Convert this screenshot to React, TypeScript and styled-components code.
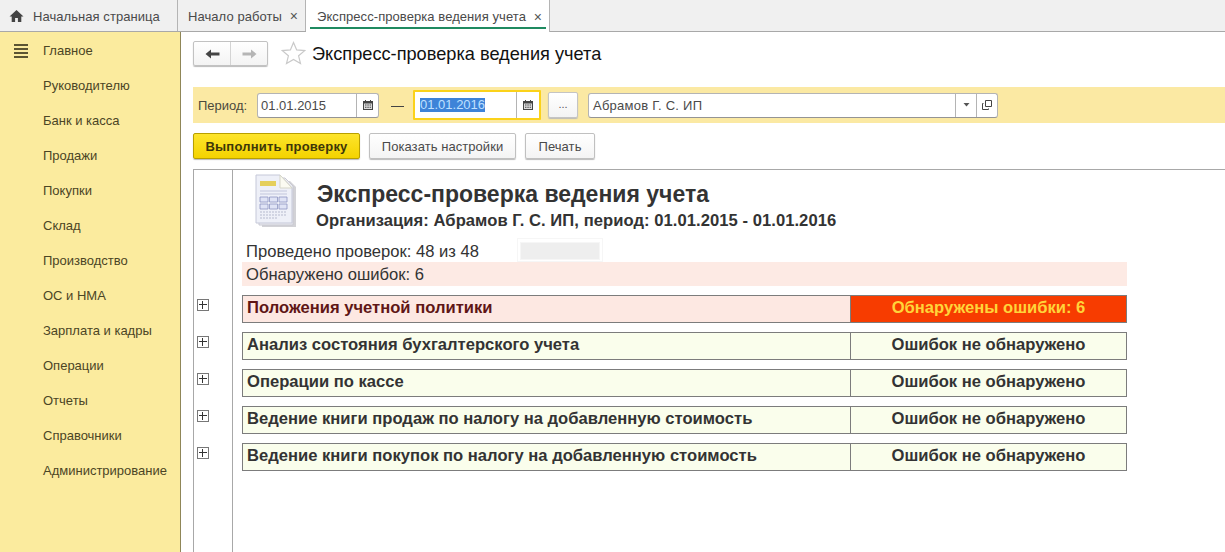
import React from "react";
import styled, { createGlobalStyle } from "styled-components";

const Global = createGlobalStyle`
  html, body { margin: 0; padding: 0; background: #fff; }
  body { font-family: "Liberation Sans", Arial, sans-serif; }
  * { box-sizing: border-box; }
`;

const Page = styled.div`
  width: 1225px; height: 552px; overflow: hidden;
  display: flex; flex-direction: column;
`;
const TabBar = styled.div`
  height: 32px; flex: none; display: flex;
  background: #f0f0f0; border-bottom: 1px solid #a8a8a8;
`;
const HomeTab = styled.div`
  width: 178px; display: flex; align-items: center; padding: 1px 0 0 9px; gap: 9px;
  border-right: 1px solid #b4b4b4; font-size: 13px; color: #4a4a4a; letter-spacing: 0.06px;
`;
const Tab = styled.div<{ $active?: boolean; $w: number }>`
  width: ${p => p.$w}px; position: relative; display: flex; align-items: center;
  justify-content: space-between; padding: 1px 7px 0 ${p => (p.$active ? 11 : 10)}px;
  font-size: 13px; color: #4a4a4a; letter-spacing: 0.07px;
  border-right: 1px solid #b4b4b4;
  background: ${p => (p.$active ? "#fff" : "transparent")};
  height: ${p => (p.$active ? "32px" : "31px")};
  &::after {
    content: ""; display: ${p => (p.$active ? "block" : "none")};
    position: absolute; left: 4px; right: 3px; bottom: 3px; height: 2px; background: #1f8a60;
  }
`;
const Close = styled.span`font-size: 14px; color: #555; line-height: 1;`;
const Body = styled.div`flex: 1; min-height: 0; display: flex;`;
const Side = styled.nav`
  width: 181px; flex: none; background: #fbeb9e; border-right: 1px solid #8f8658;
  padding-top: 1px; position: relative;
`;
const MenuItem = styled.div`
  height: 35px; display: flex; align-items: center; padding-left: 43px;
  font-size: 13px; color: #4b4525;
`;
const Burger = styled.span`
  position: absolute; left: 14px; top: 12px; width: 14px; height: 14px;
  display: flex; flex-direction: column; justify-content: space-between;
  & > i { display: block; height: 2px; background: #5b5432; }
`;
const Main = styled.main`
  flex: 1; min-width: 0; display: flex; flex-direction: column; padding-left: 12px;
`;
const Head = styled.div`
  height: 55px; flex: none; display: flex; align-items: flex-start; padding-top: 9px;
`;
const NavGroup = styled.div`
  width: 75px; height: 25px; display: flex; border: 1px solid #c2c2c2; border-radius: 2px;
  background: linear-gradient(#fff, #f3f3f3); box-shadow: 0 1px 1px #bbb; margin-right: 13px;
`;
const NavBtn = styled.div`
  flex: 1; display: flex; align-items: center; justify-content: center;
  & + & { border-left: 1px solid #d4d4d4; }
`;
const PageTitle = styled.h1`
  margin: 2px 0 0 6px; font-size: 18.2px; line-height: 22px; font-weight: 400; color: #111;
`;
const Filter = styled.div`
  height: 36px; flex: none; background: #fbe9a3; display: flex; align-items: center;
  padding-left: 5px;
`;
const Label = styled.span`font-size: 13px; color: #4b4a3c; width: 59px;`;
const Field = styled.div<{ $w: number; $focus?: boolean }>`
  width: ${p => p.$w}px; height: ${p => (p.$focus ? "30px" : "25px")}; display: flex;
  background: #fff; border-radius: ${p => (p.$focus ? "1px" : "3px")};
  border: ${p => (p.$focus ? "2px solid #fbd21a" : "1px solid #b4b4b4")};
  border-bottom-color: ${p => (p.$focus ? "#fbd21a" : "#949494")};
`;
const FieldText = styled.div<{ $pad?: number; $track?: number }>`
  flex: 1; display: flex; align-items: center; padding-left: ${p => p.$pad ?? 3}px;
  font-size: 13px; color: #4a4a4a; letter-spacing: ${p => p.$track ?? 0}px;
`;
const Selected = styled.span`background: #3e83d8; color: #bfe0ff; line-height: 14px;`;
const FieldBtn = styled.div<{ $w: number }>`
  width: ${p => p.$w}px; flex: none; display: flex; align-items: center; justify-content: center;
  border-left: 1px solid #b4b4b4;
`;
const Dash = styled.span`
  width: 13px; height: 1px; background: #444; margin: 0 9px 0 12px;
  display: block; position: relative; top: 1px;
`;
const Dots = styled.div`
  width: 30px; height: 26px; margin-left: 7px; margin-right: 10px; border: 1px solid #c4c4c4;
  border-radius: 2px; background: linear-gradient(#fff, #f3f3f3); box-shadow: 0 1px 1px #bbb;
  display: flex; align-items: center; justify-content: center; font-size: 11px; color: #555;
  padding-bottom: 2px;
`;
const Actions = styled.div`
  height: 46px; flex: none; display: flex; align-items: center; gap: 9px; padding-top: 0;
`;
const Button = styled.div<{ $primary?: boolean; $w: number }>`
  width: ${p => p.$w}px; height: 26px; display: flex; align-items: center; justify-content: center;
  font-size: 13px; border-radius: 2px;
  letter-spacing: ${p => (p.$primary ? "0.2px" : "0.06px")};
  color: ${p => (p.$primary ? "#3d3608" : "#4a4a4a")};
  font-weight: ${p => (p.$primary ? 700 : 400)};
  border: 1px solid ${p => (p.$primary ? "#b89f00" : "#c0c0c0")};
  background: ${p => (p.$primary ? "linear-gradient(#fde42c, #f4d300)" : "linear-gradient(#fff, #f4f4f4)")};
  box-shadow: 0 1px 1px #bbb;
`;
const Report = styled.section`
  flex: 1; min-height: 0; display: flex; border-top: 1px solid #a8a8a8; border-left: 1px solid #a8a8a8;
`;
const Gutter = styled.div`
  width: 39px; flex: none; border-right: 1px solid #a8a8a8; padding: 129px 0 0 3px;
  display: flex; flex-direction: column; gap: 25px;
`;
const Plus = styled.div`
  width: 12px; height: 12px; border: 1px solid #777; background: #fff; position: relative;
  &::before { content: ""; position: absolute; left: 1px; right: 1px; top: 4px; height: 1px; background: #333; }
  &::after { content: ""; position: absolute; top: 1px; bottom: 1px; left: 4px; width: 1px; background: #333; }
`;
const Sheet = styled.div`flex: 1; min-width: 0; padding-left: 9px; width: 885px;`;
const SheetHead = styled.div`
  height: 68px; display: flex; align-items: flex-start; padding: 4px 0 0 13px;
`;
const Titles = styled.div`margin-left: 20px; padding-top: 7px;`;
const ReportTitle = styled.div`font-size: 23px; font-weight: 700; color: #333; line-height: 26px;`;
const Org = styled.div`
  font-size: 16.6px; font-weight: 700; color: #333; line-height: 18px; margin: 5px 0 0 -1px;
  letter-spacing: 0.05px;
`;
const Stat = styled.div`
  height: 24px; width: 885px; display: flex; align-items: center; padding: 3px 0 0 4px;
  font-size: 16.6px; color: #333; position: relative;
`;
const Progress = styled.div`
  position: absolute; left: 275px; top: 0; width: 86px; height: 24px;
  border: 1px solid #f6f6f6; padding: 3px 2px 1px;
  & > i { display: block; height: 100%; background: #eee; border: 1px solid #f6f6f6; }
`;
const ErrorStrip = styled(Stat)`background: #fdeae4; padding-top: 2px;`;
const Rows = styled.div`
  margin-top: 9px; width: 885px; display: flex; flex-direction: column; gap: 9px;
`;
const Row = styled.div<{ $err?: boolean }>`
  height: 28px; display: flex; border: 1px solid #7c7c7c;
  background: ${p => (p.$err ? "#fde8e2" : "#fafeec")};
  color: ${p => (p.$err ? "#5f1616" : "#333")};
  font-size: 16.6px; font-weight: 700;
`;
const RowName = styled.div`
  width: 608px; flex: none; padding: 2px 0 0 4px; line-height: 20px; border-right: 1px solid #7c7c7c;
`;
const RowState = styled.div<{ $err?: boolean }>`
  flex: 1; text-align: center; padding-top: 2px; line-height: 20px;
  background: ${p => (p.$err ? "#f73c00" : "transparent")};
  color: ${p => (p.$err ? "#ffd43a" : "#333")};
`;

const menu = ["Главное","Руководителю","Банк и касса","Продажи","Покупки","Склад","Производство","ОС и НМА","Зарплата и кадры","Операции","Отчеты","Справочники","Администрирование"];
const rows = [
  { name: "Положения учетной политики", state: "Обнаружены ошибки: 6", err: true },
  { name: "Анализ состояния бухгалтерского учета", state: "Ошибок не обнаружено" },
  { name: "Операции по кассе", state: "Ошибок не обнаружено" },
  { name: "Ведение книги продаж по налогу на добавленную стоимость", state: "Ошибок не обнаружено" },
  { name: "Ведение книги покупок по налогу на добавленную стоимость", state: "Ошибок не обнаружено" },
];

const HomeIcon = () => (
  <svg width="15" height="14" viewBox="0 0 15 14"><path d="M7.5 1 0.5 7.6h2.2V13h3.4V9h2.8v4h3.4V7.6h2.2z" fill="#444"/></svg>
);
const Arrow = ({ left, color }: { left?: boolean; color: string }) => (
  <svg width="15" height="10" viewBox="0 0 15 10" style={left ? undefined : { transform: "scaleX(-1)" }}>
    <path d="M0.5 5 6 0.5V3.5H14.5V6.5H6V9.5z" fill={color}/>
  </svg>
);
const Star = () => (
  <svg width="25" height="24" viewBox="0 0 25 24" style={{ flex: "none" }}>
    <path d="M12.5 1.5l3.2 7.4 8 .7-6.1 5.2 1.9 7.8-7-4.2-7 4.2 1.9-7.8L1.400 9.600l8-.7z" fill="#fff" stroke="#c9c9c9" strokeWidth="1.2"/>
  </svg>
);
const Calendar = () => (
  <svg width="10" height="10" viewBox="0 0 10 10">
    <path d="M2 0h1v1h4V0h1v1h2v9H0V1h2z" fill="#444"/>
    <path d="M1 3.500h8V9H1z" fill="#ddd"/>
    <path d="M2 4.500h1.500v1H2zM4.300 4.500h1.500v1H4.300zM6.600 4.500h1.500v1H6.600zM2 6.800h1.500v1H2zM4.300 6.800h1.500v1H4.300zM6.600 6.800h1.500v1H6.600z" fill="#444"/>
  </svg>
);
const Caret = () => (
  <svg width="7" height="4" viewBox="0 0 7 4"><path d="M0.5 0h6L3.500 3.500z" fill="#555"/></svg>
);
const OpenIcon = () => (
  <svg width="10" height="10" viewBox="0 0 10 10" fill="none" stroke="#444">
    <path d="M3.500 0.500h6v6h-6z"/>
    <path d="M1.500 3.500h-1v6h6v-1"/>
  </svg>
);
const DocIcon = () => (
  <svg width="42" height="54" viewBox="0 0 42 54" style={{ flex: "none" }}>
    <path d="M7 7h28l6 6v40H7z" fill="#d2d2d6"/>
    <path d="M4 4h26l8 8v39H4z" fill="#ecedf2" stroke="#c8c8d2"/>
    <path d="M1 1h24l12 13v35H1z" fill="#eef0f8" stroke="#c5c8d8"/>
    <path d="M25 1l12 13H25z" fill="#fbfbf2" stroke="#d5d5c8"/>
    <path d="M5 7h16v5H5z" fill="#e5cf5c"/>
    <path d="M5 17h27M5 20h27" stroke="#c2c6dc"/>
    <path d="M5 23h8v5H5zM14.500 23h8v5h-8zM24 23h8v5h-8zM5 30h8v5H5zM14.500 30h8v5h-8zM24 30h8v5h-8z" fill="#dfe3f5" stroke="#8e96c2" strokeWidth="0.8"/>
    <path d="M5 38h27M5 41h27M5 44h18" stroke="#b6bace" strokeDasharray="2 1"/>
  </svg>
);

export default function App() {
  return (
    <Page>
      <Global />
      <TabBar>
        <HomeTab><HomeIcon />Начальная страница</HomeTab>
        <Tab $w={128}>Начало работы<Close>×</Close></Tab>
        <Tab $w={244} $active>Экспресс-проверка ведения учета<Close>×</Close></Tab>
      </TabBar>
      <Body>
        <Side>
          <Burger><i /><i /><i /><i /></Burger>
          {menu.map(m => <MenuItem key={m}>{m}</MenuItem>)}
        </Side>
        <Main>
          <Head>
            <NavGroup>
              <NavBtn><Arrow left color="#444" /></NavBtn>
              <NavBtn><Arrow color="#b5b5b5" /></NavBtn>
            </NavGroup>
            <Star />
            <PageTitle>Экспресс-проверка ведения учета</PageTitle>
          </Head>
          <Filter>
            <Label>Период:</Label>
            <Field $w={122}>
              <FieldText>01.01.2015</FieldText>
              <FieldBtn $w={22}><Calendar /></FieldBtn>
            </Field>
            <Dash />
            <Field $w={128} $focus>
              <FieldText $pad={5}><Selected>01.01.2016</Selected></FieldText>
              <FieldBtn $w={23}><Calendar /></FieldBtn>
            </Field>
            <Dots>...</Dots>
            <Field $w={410}>
              <FieldText $pad={4} $track={0.25}>Абрамов Г. С. ИП</FieldText>
              <FieldBtn $w={21}><Caret /></FieldBtn>
              <FieldBtn $w={21}><OpenIcon /></FieldBtn>
            </Field>
          </Filter>
          <Actions>
            <Button $primary $w={167}>Выполнить проверку</Button>
            <Button $w={147}>Показать настройки</Button>
            <Button $w={70}>Печать</Button>
          </Actions>
          <Report>
            <Gutter>{rows.map(r => <Plus key={r.name} />)}</Gutter>
            <Sheet>
              <SheetHead>
                <DocIcon />
                <Titles>
                  <ReportTitle>Экспресс-проверка ведения учета</ReportTitle>
                  <Org>Организация: Абрамов Г. С. ИП, период: 01.01.2015 - 01.01.2016</Org>
                </Titles>
              </SheetHead>
              <Stat>Проведено проверок: 48 из 48<Progress><i /></Progress></Stat>
              <ErrorStrip>Обнаружено ошибок: 6</ErrorStrip>
              <Rows>
                {rows.map(r => (
                  <Row key={r.name} $err={r.err}>
                    <RowName>{r.name}</RowName>
                    <RowState $err={r.err}>{r.state}</RowState>
                  </Row>
                ))}
              </Rows>
            </Sheet>
          </Report>
        </Main>
      </Body>
    </Page>
  );
}
